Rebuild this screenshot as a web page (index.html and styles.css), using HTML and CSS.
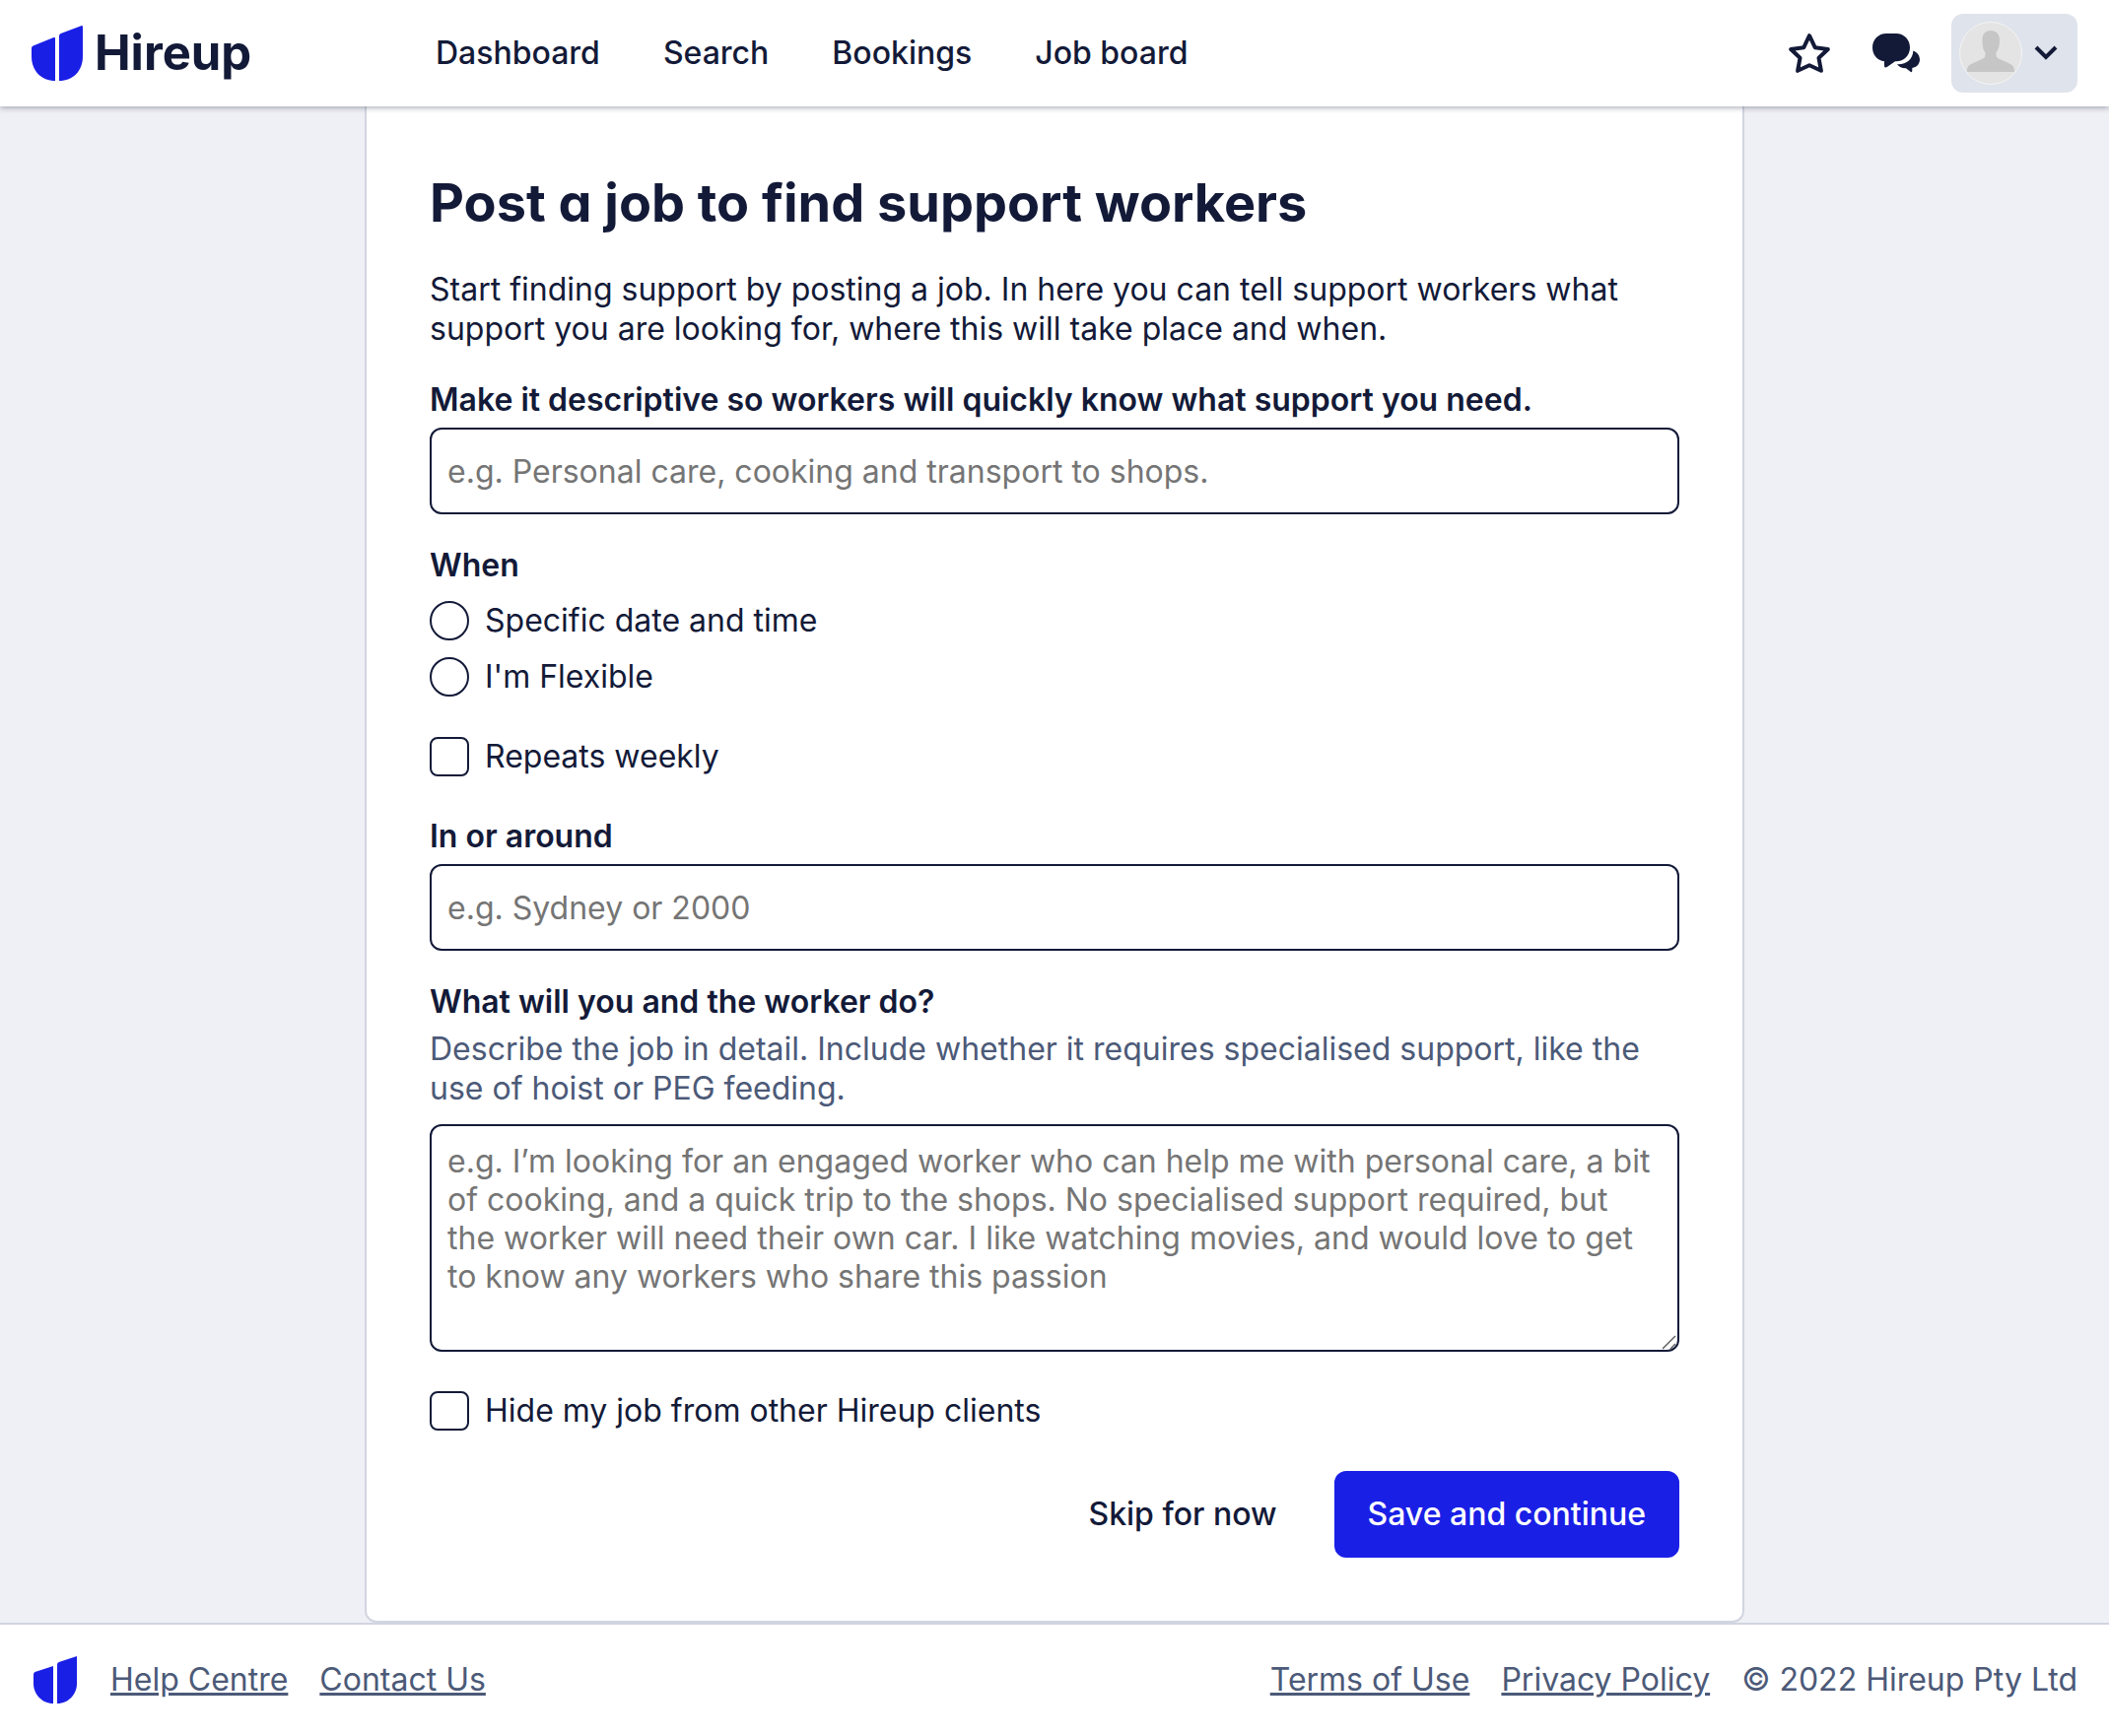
FILE: index.html
```html
<!DOCTYPE html>
<html lang="en">
<head>
  <meta charset="utf-8">
  <meta name="viewport" content="width=device-width, initial-scale=1">
  <title>Post a job | Hireup</title>
  <link rel="stylesheet" href="styles.css">
</head>
<body>
  <header class="site-header">
    <a class="brand" href="#">
      <svg class="brand-mark" viewBox="0 0 52 56" aria-hidden="true">
        <path d="M0 23Q0 21.200 1.600 20.500L22.500 12.100Q24 11.600 24 13.200V56C10 56 0 46 0 31Z"/>
        <path d="M28 10.500Q28 8.700 29.700 8L50.300.2Q52-.3 52 1.300V31C52 46 42 56 28 56Z"/>
      </svg>
      <span class="brand-name">Hireup</span>
    </a>
    <nav class="main-nav" aria-label="Main">
      <a href="#">Dashboard</a>
      <a href="#">Search</a>
      <a href="#">Bookings</a>
      <a href="#">Job board</a>
    </nav>
    <div class="header-actions">
      <a class="icon-link" href="#" aria-label="Favourites">
        <svg class="icon-star" viewBox="0 0 42 40" aria-hidden="true">
          <path d="M21 2.200 26.700 14.200 39.800 16 30.500 24.800 32.900 37.800 21 32.200 9.100 37.800 11.500 24.800 2.200 16 15.300 14.200Z"/>
        </svg>
      </a>
      <a class="icon-link" href="#" aria-label="Messages">
        <svg class="icon-chat" viewBox="0 0 48 40" aria-hidden="true">
          <path d="M14 0H24C32 0 38 6.200 38 14.200S32 28.300 24 28.300H23L15.500 33.500Q12 35.500 12 33V28.300C5 27.500 0 21.500 0 14.200 0 6.200 6 0 14 0Z"/>
          <path d="M41.300 17.500C45.500 19 48 22.600 48 26.500 48 31 44.800 34.200 40.300 35V37.700Q40.300 40 38.200 38.600L34 35.300C30.500 35.500 27 34.300 25 31.300 34.500 31.800 41 26 41.300 17.500Z"/>
        </svg>
      </a>
      <button class="account" type="button" aria-label="Account menu">
        <svg class="avatar" viewBox="0 0 64 64" aria-hidden="true">
          <circle class="avatar-disc" cx="32" cy="32" r="31.500"/>
          <path class="avatar-person" d="M32 9C37.500 9 41 12.500 41 18.500 41 24 40 28.500 37.500 31V34C37.500 36 39 37 41 38L51 42.500C55 44.500 56 46 56 51H8C8 46 9 44.500 13 42.500L23 38C25 37 26.500 36 26.500 34V31C24 28.500 23.500 24 23.500 18.500 23.500 12.500 26.500 9 32 9Z"/>
        </svg>
        <svg class="icon-chevron" viewBox="0 0 24 16" aria-hidden="true">
          <path d="M2 2 12 12 22 2"/>
        </svg>
      </button>
    </div>
  </header>

  <main class="page">
    <form class="card">
      <h1 class="title">Post a job to find support workers</h1>
      <p class="intro">Start finding support by posting a job. In here you can tell support workers what support you are looking for, where this will take place and when.</p>

      <div class="field">
        <label class="label" for="job-title">Make it descriptive so workers will quickly know what support you need.</label>
        <input class="control" id="job-title" type="text" placeholder="e.g. Personal care, cooking and transport to shops.">
      </div>

      <fieldset class="choices">
        <legend class="label">When</legend>
        <label class="choice"><input class="tick tick-round" type="radio" name="when">Specific date and time</label>
        <label class="choice"><input class="tick tick-round" type="radio" name="when">I'm Flexible</label>
      </fieldset>

      <label class="choice choice-single"><input class="tick" type="checkbox">Repeats weekly</label>

      <div class="field">
        <label class="label" for="location">In or around</label>
        <input class="control" id="location" type="text" placeholder="e.g. Sydney or 2000">
      </div>

      <div class="field field-long">
        <label class="label" for="details">What will you and the worker do?</label>
        <p class="hint" id="details-hint">Describe the job in detail. Include whether it requires specialised support, like the use of hoist or PEG feeding.</p>
        <textarea class="control control-area" id="details" rows="5" aria-describedby="details-hint" placeholder="e.g. I’m looking for an engaged worker who can help me with personal care, a bit of cooking, and a quick trip to the shops. No specialised support required, but the worker will need their own car. I like watching movies, and would love to get to know any workers who share this passion"></textarea>
      </div>

      <label class="choice choice-single"><input class="tick" type="checkbox">Hide my job from other Hireup clients</label>

      <div class="actions">
        <button class="button" type="button">Skip for now</button>
        <button class="button button-primary" type="submit">Save and continue</button>
      </div>
    </form>
  </main>

  <footer class="site-footer">
    <svg class="footer-mark" viewBox="0 0 44 48" aria-hidden="true">
      <path d="M0 18.500Q0 16.700 1.500 16L20 10V48C8 48 0 38 0 28Z"/>
      <path d="M24 8.500Q24 6.800 25.700 6L44 0V28C44 38 36 48 24 48Z"/>
    </svg>
    <a href="#">Help Centre</a>
    <a href="#">Contact Us</a>
    <a class="footer-push" href="#">Terms of Use</a>
    <a href="#">Privacy Policy</a>
    <span>© 2022 Hireup Pty Ltd</span>
  </footer>
</body>
</html>
```
FILE: styles.css
```css
:root {
  --ink: #131a38;
  --slate: #4c5a78;
  --line: #d1d5e1;
  --blue: #1a1fe6;
  --canvas: #eff0f5;
}

* {
  box-sizing: border-box;
}

body {
  margin: 0;
  min-height: 100vh;
  display: flex;
  flex-direction: column;
  background: var(--canvas);
  color: var(--ink);
  font: 400 32px/40px Inter, "Liberation Sans", sans-serif;
}

a {
  color: inherit;
  text-decoration: none;
}

svg {
  display: block;
  flex: none;
}

/* Header */
.site-header {
  position: sticky;
  top: 0;
  z-index: 1;
  display: flex;
  align-items: center;
  height: 108px;
  padding: 0 32px;
  background: #fff;
  box-shadow: 0 1px 6px rgba(19, 26, 56, 0.4);
}

.brand {
  display: flex;
  align-items: center;
  gap: 12px;
  width: 410px;
}

.brand-mark {
  width: 52px;
  height: 56px;
  fill: var(--blue);
}

.brand-name {
  font-size: 49px;
  font-weight: 700;
  line-height: 56px;
}

.main-nav {
  display: flex;
  gap: 64px;
  font-weight: 500;
}

.header-actions {
  display: flex;
  align-items: center;
  margin-left: auto;
}

.icon-link {
  margin-right: 32px;
}

.icon-star {
  width: 42px;
  height: 40px;
  margin-right: 11px;
  fill: none;
  stroke: var(--ink);
  stroke-width: 4;
  stroke-linejoin: round;
}

.icon-chat {
  width: 48px;
  height: 40px;
  fill: var(--ink);
}

.account {
  display: flex;
  align-items: center;
  gap: 12px;
  height: 80px;
  padding: 8px 20px 8px 8px;
  border: 0;
  border-radius: 12px;
  background: #dfe3eb;
}

.avatar {
  width: 64px;
  height: 64px;
}

.avatar-disc {
  fill: #e4e4e4;
  stroke: #f4f4f4;
}

.avatar-person {
  fill: #c6c6c6;
}

.icon-chevron {
  width: 24px;
  height: 16px;
  fill: none;
  stroke: var(--ink);
  stroke-width: 4;
}

/* Form card */
.page {
  flex: 1;
}

.card {
  max-width: 1400px;
  margin: 0 auto;
  padding: 66px 64px 64px;
  border: 2px solid var(--line);
  border-top: 0;
  border-radius: 0 0 12px 12px;
  background: #fff;
}

.title {
  margin: 0 0 36px;
  font-size: 54px;
  font-weight: 700;
  line-height: 64px;
}

.brand-name,
.title {
  font-feature-settings: "cv11";
}

.intro {
  margin: 0 0 32px;
}

.field {
  display: flex;
  flex-direction: column;
  gap: 8px;
  margin-bottom: 32px;
}

.label {
  padding: 0;
  font-weight: 600;
}

.hint {
  margin: 0 0 8px;
  color: var(--slate);
}

.control {
  width: 100%;
  height: 88px;
  padding: 0 16px;
  border: 2px solid var(--ink);
  border-radius: 12px;
  background: #fff;
  color: var(--ink);
  font: inherit;
}

.control::placeholder {
  color: #757575;
  opacity: 1;
}

.control-area {
  height: auto;
  padding: 16px;
  line-height: 39px;
  resize: vertical;
}

.control-area::-webkit-resizer {
  background: url("data:image/svg+xml,%3Csvg xmlns='http://www.w3.org/2000/svg' width='15' height='15' viewBox='0 0 15 15'%3E%3Cpath d='M0 14 13 1M8 14 13 9' fill='none' stroke='%23555' stroke-width='1.300'/%3E%3C/svg%3E") no-repeat right bottom;
}

.field-long {
  margin-bottom: 40px;
}

.choices {
  display: flex;
  flex-direction: column;
  gap: 16px;
  margin: 0 0 40px;
  padding: 0;
  border: 0;
}

.choices .label {
  margin-bottom: 16px;
}

.choice {
  display: flex;
  align-items: flex-start;
  gap: 16px;
  height: 41px;
}

.choice-single {
  margin-bottom: 40px;
}

.tick {
  flex: none;
  appearance: none;
  width: 40px;
  height: 40px;
  margin: 0;
  border: 2px solid var(--ink);
  border-radius: 8px;
  background: #fff;
}

.tick-round {
  border-radius: 50%;
}

.tick:checked {
  background: var(--blue);
}

.actions {
  display: flex;
  justify-content: flex-end;
  gap: 24px;
}

.button {
  height: 88px;
  padding: 0 32px;
  border: 2px solid transparent;
  border-radius: 12px;
  background: none;
  color: var(--ink);
  font: inherit;
  font-weight: 500;
}

.button-primary {
  border-color: var(--blue);
  background: var(--blue);
  color: #fff;
}

/* Footer */
.site-footer {
  display: flex;
  align-items: center;
  gap: 32px;
  height: 115px;
  padding: 0 32px 2px 34px;
  border-top: 2px solid var(--line);
  background: #fff;
  color: var(--slate);
}

.site-footer a {
  text-decoration: underline;
}

.site-footer .footer-push {
  margin-left: auto;
}

.footer-mark {
  width: 44px;
  height: 48px;
  margin-right: 2px;
  fill: var(--blue);
}
```
